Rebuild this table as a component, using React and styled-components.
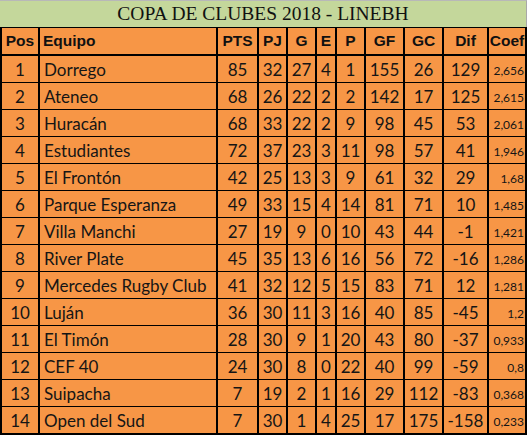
import React from "react";
import styled, { createGlobalStyle } from "styled-components";

const GlobalStyle = createGlobalStyle`
  body {
    margin: 0;
    background: #fff;
  }
`;

const Wrapper = styled.div`
  width: 527px;
`;

const Title = styled.div`
  height: 27px;
  background: #c4d79b;
  border-top: 1px solid #b8b8b8;
  border-right: 1px solid #a8a8a8;
  box-sizing: border-box;
  display: flex;
  align-items: center;
  justify-content: center;
  font-family: "Liberation Serif", serif;
  font-size: 19.5px;
  color: #111;
`;

const Grid = styled.div`
  display: grid;
  grid-template-columns: 36px 176px 39px 27px 27px 18px 27px 37px 37px 43px 36px;
  column-gap: 2px;
  row-gap: 1px;
  padding: 1px 2px 2px 2px;
  background: #000;
`;

const Cell = styled.div`
  height: 26px;
  box-sizing: border-box;
  background: #f79646;
  display: flex;
  align-items: center;
  justify-content: ${({ $align }) => $align || "center"};
  padding: ${({ $align }) => ($align === "flex-start" ? "0 0 0 4px" : $align === "flex-end" ? "3px 1px 0 0" : "0")};
  font-family: Lato, "Open Sans", sans-serif;
  font-size: ${({ $small }) => ($small ? "12px" : "17px")};
  color: #151515;
  white-space: nowrap;
  overflow: hidden;
`;

const HeadCell = styled(Cell)`
  margin-bottom: 1px;
  font-family: "Liberation Sans", Arial, sans-serif;
  font-weight: bold;
  font-size: 15.5px;
  color: #111;
  padding: ${({ $align }) => ($align === "flex-start" ? "0 0 0 3px" : "0")};
`;

const headers = ["Pos", "Equipo", "PTS", "PJ", "G", "E", "P", "GF", "GC", "Dif", "Coef"];

const rows = [
  [1, "Dorrego", 85, 32, 27, 4, 1, 155, 26, 129, "2,656"],
  [2, "Ateneo", 68, 26, 22, 2, 2, 142, 17, 125, "2,615"],
  [3, "Huracán", 68, 33, 22, 2, 9, 98, 45, 53, "2,061"],
  [4, "Estudiantes", 72, 37, 23, 3, 11, 98, 57, 41, "1,946"],
  [5, "El Frontón", 42, 25, 13, 3, 9, 61, 32, 29, "1,68"],
  [6, "Parque Esperanza", 49, 33, 15, 4, 14, 81, 71, 10, "1,485"],
  [7, "Villa Manchi", 27, 19, 9, 0, 10, 43, 44, -1, "1,421"],
  [8, "River Plate", 45, 35, 13, 6, 16, 56, 72, -16, "1,286"],
  [9, "Mercedes Rugby Club", 41, 32, 12, 5, 15, 83, 71, 12, "1,281"],
  [10, "Luján", 36, 30, 11, 3, 16, 40, 85, -45, "1,2"],
  [11, "El Timón", 28, 30, 9, 1, 20, 43, 80, -37, "0,933"],
  [12, "CEF 40", 24, 30, 8, 0, 22, 40, 99, -59, "0,8"],
  [13, "Suipacha", 7, 19, 2, 1, 16, 29, 112, -83, "0,368"],
  [14, "Open del Sud", 7, 30, 1, 4, 25, 17, 175, -158, "0,233"],
];

export default function App() {
  return (
    <Wrapper>
      <GlobalStyle />
      <Title>COPA DE CLUBES 2018 - LINEBH</Title>
      <Grid>
        {headers.map((h, i) => (
          <HeadCell key={h} $align={i === 1 ? "flex-start" : "center"}>
            {h}
          </HeadCell>
        ))}
        {rows.map((r) =>
          r.map((v, i) => (
            <Cell
              key={`${r[0]}-${i}`}
              $align={i === 1 ? "flex-start" : i === 10 ? "flex-end" : "center"}
              $small={i === 10}
            >
              {v}
            </Cell>
          ))
        )}
      </Grid>
    </Wrapper>
  );
}
